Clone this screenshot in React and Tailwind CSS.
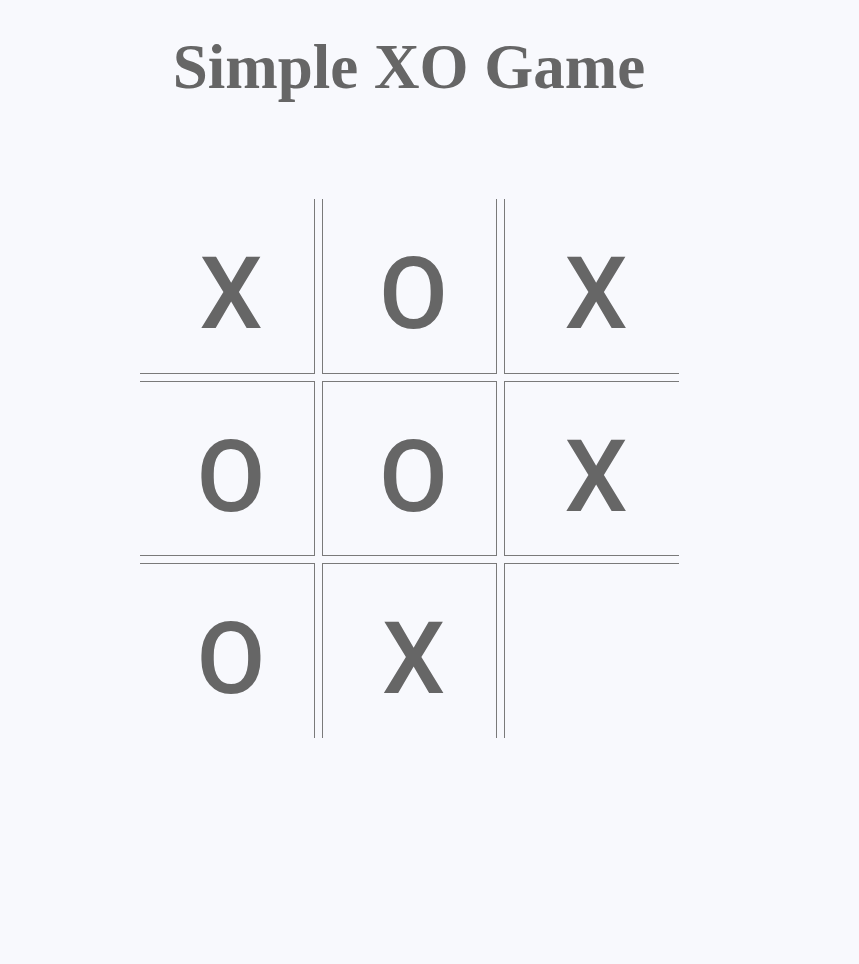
const board = ['X', 'O', 'X', 'O', 'O', 'X', 'O', 'X', ''];

// borders per cell: inner edges only
const edges = [
  'border-r border-b',
  'border-l border-r border-b',
  'border-l border-b',
  'border-t border-r border-b',
  'border',
  'border-l border-t border-b',
  'border-t border-r',
  'border-l border-t border-r',
  'border-l border-t',
];

const App = () => {
  return (
    <div className="min-h-[964px] w-full bg-[#f8f9fd]">
      <div className="w-[818px] flex flex-col items-center pt-[32px]">
        <h1 className="font-['Liberation_Serif',serif] font-bold text-[63px] leading-[70px] text-[#666666]">
          Simple XO Game
        </h1>

        <div className="mt-[97px] grid grid-cols-[repeat(3,175px)] gap-[7px]">
          {board.map((v, i) => (
            <div
              key={i}
              className={`h-[175px] w-[175px] flex items-center justify-center pt-[16px] pl-[9px] border-[#7a7a7a] ${edges[i]}`}
            >
              <span className="font-['Roboto',sans-serif] font-medium text-[100px] leading-none text-[#666666]">
                {v}
              </span>
            </div>
          ))}
        </div>
      </div>
    </div>
  );
};

export default App;
